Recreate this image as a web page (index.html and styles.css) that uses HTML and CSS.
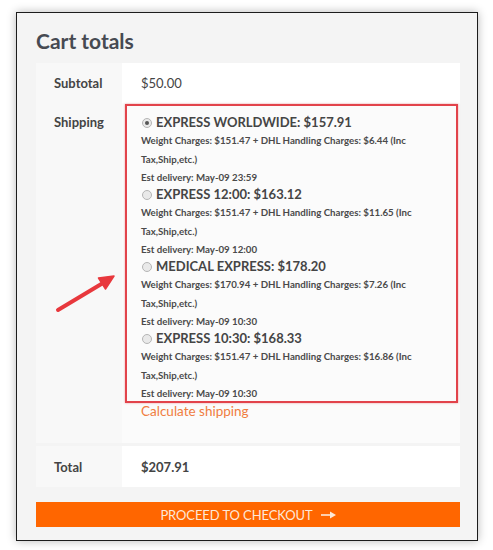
FILE: index.html
```html
<!DOCTYPE html>
<html>
<head>
<meta charset="utf-8">
<link rel="stylesheet" href="styles.css">
</head>
<body>
<div class="frame">
  <h2 class="title">Cart totals</h2>
  <table class="totals">
    <tr class="row-sub">
      <th>Subtotal</th>
      <td>$50.00</td>
    </tr>
    <tr class="row-ship">
      <th>Shipping</th>
      <td>
        <ul class="methods">
          <li>
            <div class="mtitle"><span class="radio checked"></span>EXPRESS WORLDWIDE: $157.91</div>
            <div class="desc">Weight Charges: $151.47 + DHL Handling Charges: $6.44 (Inc<br>Tax,Ship,etc.)</div>
            <div class="est">Est delivery: May-09 23:59</div>
          </li>
          <li>
            <div class="mtitle"><span class="radio"></span>EXPRESS 12:00: $163.12</div>
            <div class="desc">Weight Charges: $151.47 + DHL Handling Charges: $11.65 (Inc<br>Tax,Ship,etc.)</div>
            <div class="est">Est delivery: May-09 12:00</div>
          </li>
          <li>
            <div class="mtitle"><span class="radio"></span>MEDICAL EXPRESS: $178.20</div>
            <div class="desc">Weight Charges: $170.94 + DHL Handling Charges: $7.26 (Inc<br>Tax,Ship,etc.)</div>
            <div class="est">Est delivery: May-09 10:30</div>
          </li>
          <li>
            <div class="mtitle"><span class="radio"></span>EXPRESS 10:30: $168.33</div>
            <div class="desc">Weight Charges: $151.47 + DHL Handling Charges: $16.86 (Inc<br>Tax,Ship,etc.)</div>
            <div class="est">Est delivery: May-09 10:30</div>
          </li>
        </ul>
        <a class="calc" href="#">Calculate shipping</a>
      </td>
    </tr>
    <tr class="row-total">
      <th>Total</th>
      <td><strong>$207.91</strong></td>
    </tr>
  </table>
  <a class="checkout" href="#">PROCEED TO CHECKOUT
    <svg class="arr" width="15" height="8" viewBox="0 0 15 8"><line x1="0" y1="4" x2="10" y2="4" stroke="#fde8d8" stroke-width="1.6"/><polygon points="9,0.5 15,4 9,7.5" fill="#fde8d8"/></svg>
  </a>
</div>
<svg class="annot" width="493" height="550" viewBox="0 0 493 550">
  <line x1="58" y1="310" x2="103" y2="283" stroke="#e8383d" stroke-width="4" stroke-linecap="round"/>
  <polygon points="114,276 105.5,289 98.5,278" fill="#e8383d" stroke="#e8383d" stroke-width="1.5" stroke-linejoin="round"/>
</svg>
</body>
</html>
```
FILE: styles.css
```css
html, body {
  margin: 0;
  padding: 0;
  background: #ffffff;
}
body {
  width: 493px;
  height: 550px;
  overflow: hidden;
  font-family: Lato, "Open Sans", sans-serif;
  color: #444444;
}
.frame {
  margin: 12px 0 0 16px;
  width: 462px;
  height: 529px;
  box-sizing: border-box;
  border: 1.5px solid #1c1c1c;
  background: #f4f4f4;
  box-shadow: 0 0 9px rgba(0, 0, 0, 0.28);
  padding: 15px 17px 0 19px;
}
.title {
  margin: 0 0 10px 0;
  font-size: 21px;
  line-height: 25px;
  font-weight: 700;
  color: #464a52;
}
.totals {
  width: 424px;
  border-collapse: collapse;
  border-spacing: 0;
}
.totals th {
  width: 86px;
  box-sizing: border-box;
  background: #f8f8f8;
  text-align: left;
  font-size: 13px;
  font-weight: 700;
  padding: 0 0 0 18px;
  color: #444;
}
.totals td {
  background: #ffffff;
  font-size: 13px;
  padding: 0 0 0 19px;
  color: #444;
}
.row-sub th, .row-sub td {
  height: 40px;
  vertical-align: middle;
}
.row-ship th {
  vertical-align: top;
  padding-top: 10px;
  line-height: 18px;
}
.row-ship td {
  background: #fbfbfb;
  vertical-align: top;
  padding: 1px 2px 24px 0;
}
.row-total th, .row-total td {
  height: 41px;
  vertical-align: middle;
  border-top: 3px solid #f4f4f4;
}
.row-total strong {
  font-weight: 700;
}
.methods {
  list-style: none;
  margin: 0 0 0 3px;
  padding: 7px 0 0 14px;
  border: 2px solid #e2434b;
  box-shadow: 0 0 2px rgba(226, 67, 75, 0.5);
}
.methods li {
  margin: 0;
}
.mtitle {
  display: flex;
  align-items: center;
  font-size: 13px;
  font-weight: 700;
  line-height: 18px;
  color: #454545;
  white-space: nowrap;
}
.radio {
  width: 8px;
  height: 8px;
  border-radius: 50%;
  border: 1px solid #b5b5b5;
  background: #e9e9e9;
  margin: 1px 4px 0 1px;
  box-sizing: content-box;
  position: relative;
}
.radio.checked::after {
  content: "";
  position: absolute;
  left: 2px;
  top: 2px;
  width: 4px;
  height: 4px;
  border-radius: 50%;
  background: #555;
}
.desc {
  font-size: 9.7px;
  font-weight: 700;
  line-height: 19px;
  color: #4a4a4a;
  white-space: nowrap;
}
.est {
  font-size: 9.7px;
  font-weight: 700;
  line-height: 16px;
  color: #4a4a4a;
}
.calc {
  display: block;
  margin-left: 19px;
  font-size: 13.5px;
  line-height: 16px;
  color: #f07d40;
  text-decoration: none;
}
.checkout {
  display: flex;
  align-items: center;
  justify-content: center;
  margin-top: 15px;
  width: 424px;
  height: 25px;
  background: #ff6600;
  color: #fde8d8;
  font-size: 13px;
  text-decoration: none;
  letter-spacing: -0.1px;
}
.arr {
  margin-left: 8px;
}
.annot {
  position: absolute;
  left: 0;
  top: 0;
  pointer-events: none;
}
```
